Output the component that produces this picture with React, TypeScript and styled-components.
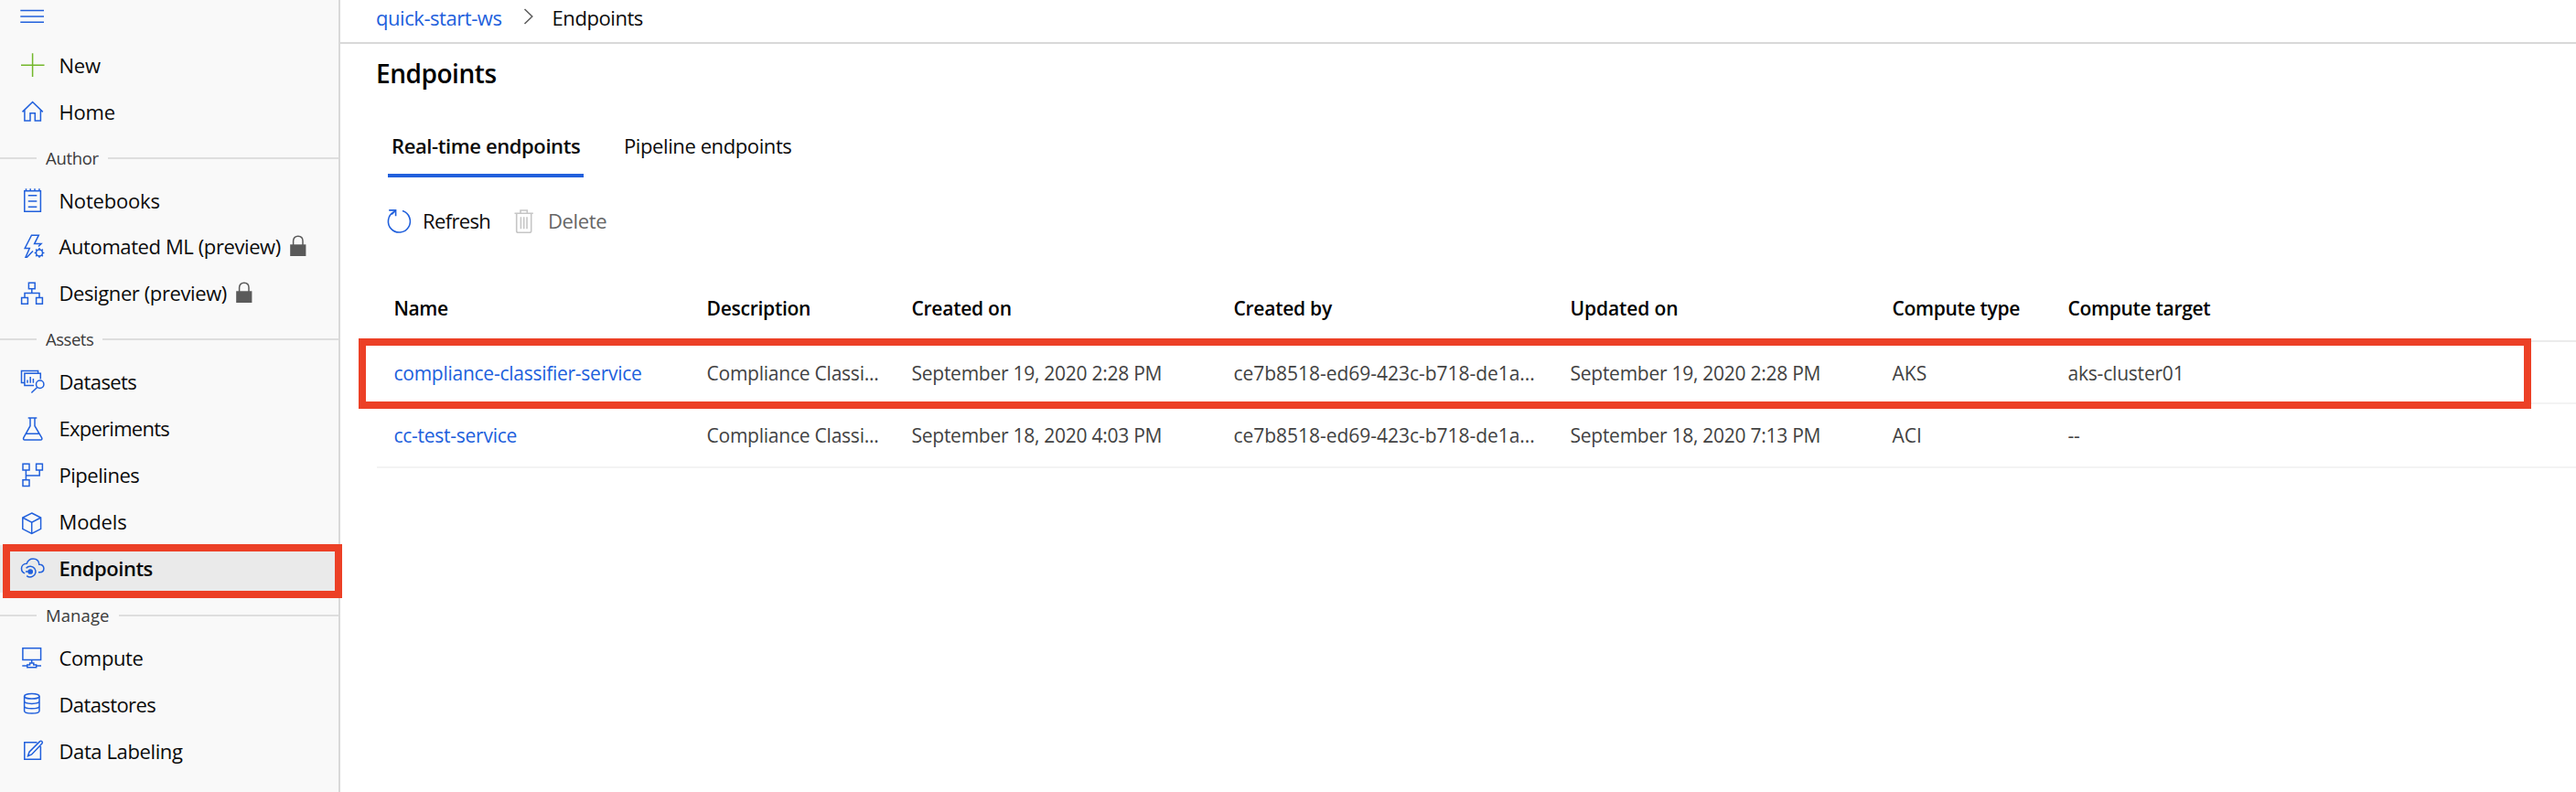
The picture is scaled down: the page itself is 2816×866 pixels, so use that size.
import React from "react";
import styled, { createGlobalStyle } from "styled-components";

const BLUE = "#2160dc";
const RED = "#ec4026";

const GlobalStyle = createGlobalStyle`
  * { box-sizing: border-box; }
  body {
    margin: 0;
    background: #fff;
    color: #0b0b0b;
    font-family: "Open Sans", "Noto Sans", sans-serif;
    font-size: 22px;
    overflow: hidden;
  }
`;

const Page = styled.div`
  display: flex;
  width: 100%;
  height: 866px;
`;

const Text = styled.span<{ $track?: number }>`
  letter-spacing: ${(p) => p.$track ?? 0}px;
  white-space: nowrap;
`;

/* ---------- sidebar ---------- */

const Sidebar = styled.nav`
  flex: 0 0 372px;
  display: flex;
  flex-direction: column;
  background: #f9f9f9;
  border-right: 2px solid #d9d9d9;
`;

const MenuToggle = styled.div`
  height: 46px;
  padding-left: 20px;
`;

const NavItem = styled.div<{ $active?: boolean; $height?: number }>`
  position: relative;
  display: flex;
  align-items: flex-start;
  height: ${(p) => p.$height ?? 51}px;
  padding: 10px 0 0 20px;
  line-height: 30px;
  background: ${(p) => (p.$active ? "#eaeaea" : "transparent")};
  font-weight: ${(p) => (p.$active ? 600 : 400)};
`;

const NavIcon = styled.svg`
  display: block;
  flex: none;
  width: 30px;
  height: 31px;
  margin-right: 14.5px;
  fill: none;
  stroke: ${BLUE};
  stroke-width: 1.5;
`;

const LockIcon = styled.svg`
  width: 18px;
  height: 24px;
  margin: 3px 0 0 10px;
`;

const GroupHeader = styled.div`
  display: flex;
  align-items: center;
  gap: 10px;
  height: 46px;
  padding-top: 4px;
  color: #3b3b3b;
  font-size: 18.5px;
  line-height: 26px;

  &::before,
  &::after {
    content: "";
    height: 2px;
    background: #dedede;
  }
  &::before { width: 40px; }
  &::after { flex: 1; }

  ${Text} { padding-bottom: 1px; }
`;

const NavHighlight = styled.div`
  position: absolute;
  z-index: 2;
  top: -1px;
  left: 3px;
  width: 371px;
  height: 59px;
  border: 8px solid ${RED};
`;

/* ---------- main area ---------- */

const Main = styled.main`
  flex: 1;
  min-width: 0;
  display: flex;
  flex-direction: column;
`;

const Breadcrumbs = styled.div`
  display: flex;
  align-items: center;
  height: 48px;
  padding: 0 0 8px 39px;
  border-bottom: 2px solid #d9d9d9;
`;

const CrumbLink = styled.a`
  color: ${BLUE};
`;

const Chevron = styled.svg`
  width: 12px;
  height: 18px;
  margin: 0 20px 2px 23px;
  fill: none;
  stroke: #5c5c5c;
  stroke-width: 1.5;
`;

const Title = styled.h1`
  margin: 0;
  padding: 1px 0 0 39px;
  height: 62px;
  font-size: 28px;
  font-weight: 600;
  line-height: 62px;
  color: #000;
`;

const Tabs = styled.div`
  display: flex;
  gap: 40px;
  height: 84px;
  padding-left: 52px;
`;

const Tab = styled.div<{ $active?: boolean }>`
  width: 214px;
  height: 84px;
  padding: 34px 0 0 4px;
  line-height: 30px;
  font-weight: ${(p) => (p.$active ? 600 : 400)};
  border-bottom: 4px solid ${(p) => (p.$active ? BLUE : "transparent")};
`;

const Toolbar = styled.div`
  display: flex;
  align-items: center;
  height: 95px;
  padding-left: 50px;

  ${Text} { padding-bottom: 1px; }
`;

const ToolButton = styled.div<{ $disabled?: boolean }>`
  display: flex;
  align-items: center;
  width: 137px;
  color: ${(p) => (p.$disabled ? "#666" : "inherit")};
`;

const ToolIcon = styled.svg`
  width: 30px;
  height: 30px;
  margin-right: 10px;
  fill: none;
  stroke-width: 1.6;
`;

const Table = styled.div`
  margin-left: 40px;
  font-size: 21px;
`;

const Row = styled.div`
  position: relative;
  display: grid;
  grid-template-columns: 342px 224px 352px 368px 352px 192px 1fr;
  align-items: center;
  height: 68px;
  padding: 2px 0 0 18.5px;
  color: #424242;
  border-bottom: 2px solid #f3f3f3;

  &:last-child {
    height: 70px;
    padding-top: 0;
  }
`;

const HeaderRow = styled(Row)`
  height: 85px;
  padding-top: 12px;
  color: #000;
  font-weight: 600;
  border-bottom-color: #ebebeb;
`;

const NameLink = styled.a`
  color: ${BLUE};
`;

const RowHighlight = styled.div`
  position: absolute;
  z-index: 2;
  top: -4px;
  left: -20px;
  width: 2375px;
  height: 77px;
  border: 8px solid ${RED};
`;

/* ---------- icons ---------- */

const icons: Record<string, React.ReactNode> = {
  New: <path stroke="#73b72b" d="M3 15.2H28.5M15.6 2.3V28" />,
  Home: <path d="M4.5 15.4L15.6 4.5L26.8 15.4M6.9 13.2V25H13V16.7H18.3V25H24.4V13.2" />,
  Notebooks: (
    <path d="M6.8 4.7H24.4V27.3H6.8ZM8.5 2.3V4.7M13.2 2.3V4.7M18 2.3V4.7M22.9 2.3V4.7M10.8 9.7H20.3M10.8 16H20.3M10.8 22.3H20.3" />
  ),
  "Automated ML (preview)": (
    <>
      <path d="M22 15.5L25 12.6H17.6L22.3 3.2H14.5L7.2 17.5H12.3L8 27.3H9.5L16 20.5" />
      <circle cx="23" cy="22.4" r="3.5" />
      <path d="M23 18.9V17M23 25.8V27.8M19.5 22.4H17.6M26.5 22.4H28.4M20.5 19.9L19.2 18.6M25.5 24.9L26.8 26.2M25.5 19.9L26.8 18.6M20.5 24.9L19.2 26.2" />
    </>
  ),
  "Designer (preview)": (
    <path d="M11.4 4.2H18.2V10.7H11.4ZM3.6 20.6H10.4V27.2H3.6ZM19.6 20.6H26.4V27.2H19.6ZM14.8 10.7V15.4M7 20.6V15.4H23V20.6" />
  ),
  Datasets: (
    <>
      <path d="M21.6 6V3.4H3.5V16.4H6.8M24.3 12.5V6.3H6.9V19.4H17M10 13.6V16.8M13.2 10V16.8M16.4 12V16.8M20.6 21.5L14.4 27.5" />
      <circle cx="23.7" cy="18.3" r="4.2" />
    </>
  ),
  Experiments: (
    <path d="M10.7 4H20.3M13 4V12.7L5.8 25.6C5.2 27 5.8 28.1 7 28.1H24.4C25.7 28.1 26.3 27 25.6 25.6L18 12.7V4M8.4 21.3H23" />
  ),
  Pipelines: (
    <path d="M5 3.3H12V10H5ZM19.6 3.3H26.4V10H19.6ZM5 20.8H12V27.5H5ZM8.4 10V20.8M8.4 16H23.2V10" />
  ),
  Models: <path d="M14.7 6L24.6 11V23.3L14.7 28.3L4.8 23.3V11ZM4.8 11L14.7 16.2L24.6 11M14.7 16.2V28.3" />,
  Endpoints: (
    <>
      <path d="M7.2 20.9C4.8 20.2 3.5 18 3.5 15.6C3.5 12.4 6 10.3 9.2 10.3C10.4 6.8 13 5 16.2 5C19.9 5 22.5 7.4 22.8 11.2C26 11 27.9 13 27.9 15.6C27.9 18.2 26.2 19.8 23.6 19.8H22" />
      <path d="M8.6 15.3C11 12.6 15.4 12.7 17.8 15.6C20 18.6 19 22.6 15.8 24.2C13.6 25.3 11 25 9.2 23.6M8 19H13" />
      <circle cx="13.2" cy="19" r="2.1" fill={BLUE} />
    </>
  ),
  Compute: (
    <path d="M4.9 4.7H24.6V17.6H4.9ZM14.7 17.6V21M9.8 25.7V23H12.6V21H16.8V23H19.7V25.7ZM4.3 24H9.8M19.7 24H25" />
  ),
  Datastores: (
    <>
      <ellipse cx="14.8" cy="6.3" rx="8.2" ry="2.8" />
      <path d="M6.6 6.3V22.3C6.6 26 23 26 23 22.3V6.3M6.6 11.6C6.6 15.3 23 15.3 23 11.6M6.6 17C6.6 20.7 23 20.7 23 17" />
    </>
  ),
  "Data Labeling": (
    <path d="M20.5 5.8H6.8V24.2H24.4V10M10.6 20.6L12 16.2L23.6 4.6C24.2 4 25.2 4 25.9 4.7C26.5 5.4 26.5 6.3 25.9 6.9L14.6 18.9Z" />
  ),
};

type Item = { label: string; track: number; locked?: boolean; active?: boolean; height?: number };

const groups: { title?: string; track?: number; items: Item[] }[] = [
  { items: [{ label: "New", track: -0.2 }, { label: "Home", track: -0.2 }] },
  {
    title: "Author",
    track: -0.3,
    items: [
      { label: "Notebooks", track: -0.2, height: 50 },
      { label: "Automated ML (preview)", track: -0.4, locked: true },
      { label: "Designer (preview)", track: -0.4, locked: true },
    ],
  },
  {
    title: "Assets",
    track: -0.48,
    items: [
      { label: "Datasets", track: -0.59 },
      { label: "Experiments", track: -0.74 },
      { label: "Pipelines", track: -0.47 },
      { label: "Models", track: -0.12 },
      { label: "Endpoints", track: -0.47, active: true, height: 52 },
    ],
  },
  {
    title: "Manage",
    track: 0.1,
    items: [
      { label: "Compute", track: -0.36 },
      { label: "Datastores", track: -0.6 },
      { label: "Data Labeling", track: -0.39 },
    ],
  },
];

const columns: [string, number][] = [
  ["Name", -0.4],
  ["Description", -0.25],
  ["Created on", -0.25],
  ["Created by", -0.25],
  ["Updated on", -0.1],
  ["Compute type", -0.3],
  ["Compute target", -0.3],
];

const cellTracks = [-0.26, -0.23, -0.26, -0.03, -0.26, 0, -0.2];

const rows = [
  {
    highlighted: true,
    cells: [
      "compliance-classifier-service",
      "Compliance Classi...",
      "September 19, 2020 2:28 PM",
      "ce7b8518-ed69-423c-b718-de1a...",
      "September 19, 2020 2:28 PM",
      "AKS",
      "aks-cluster01",
    ],
  },
  {
    highlighted: false,
    cells: [
      "cc-test-service",
      "Compliance Classi...",
      "September 18, 2020 4:03 PM",
      "ce7b8518-ed69-423c-b718-de1a...",
      "September 18, 2020 7:13 PM",
      "ACI",
      "--",
    ],
  },
];

const Lock = () => (
  <LockIcon viewBox="0 0 18 24">
    <path d="M3.6 11V6.5C3.6 3.2 5.8 1.2 8.8 1.2S14 3.2 14 6.5V11" fill="none" stroke="#5a5a5a" strokeWidth="1.5" />
    <rect x="0.2" y="10.3" width="17.2" height="12.7" fill="#5a5a5a" />
  </LockIcon>
);

export default function App() {
  return (
    <Page>
      <GlobalStyle />
      <Sidebar>
        <MenuToggle>
          <NavIcon viewBox="0 0 30 31">
            <path d="M2.3 11.6H28M2.3 18H28M2.3 24.3H28" />
          </NavIcon>
        </MenuToggle>
        {groups.map((group, i) => (
          <React.Fragment key={i}>
            {group.title && (
              <GroupHeader>
                <Text $track={group.track}>{group.title}</Text>
              </GroupHeader>
            )}
            {group.items.map((item) => (
              <NavItem key={item.label} $active={item.active} $height={item.height}>
                <NavIcon viewBox="0 0 30 31">{icons[item.label]}</NavIcon>
                <Text $track={item.track}>{item.label}</Text>
                {item.locked && <Lock />}
                {item.active && <NavHighlight />}
              </NavItem>
            ))}
          </React.Fragment>
        ))}
      </Sidebar>
      <Main>
        <Breadcrumbs>
          <CrumbLink><Text $track={-0.44}>quick-start-ws</Text></CrumbLink>
          <Chevron viewBox="0 0 12 18">
            <path d="M1.5 1L9.8 9L1.5 17" />
          </Chevron>
          <Text $track={-0.43}>Endpoints</Text>
        </Breadcrumbs>
        <Title><Text $track={-0.45}>Endpoints</Text></Title>
        <Tabs>
          <Tab $active><Text $track={-0.4}>Real-time endpoints</Text></Tab>
          <Tab><Text $track={-0.4}>Pipeline endpoints</Text></Tab>
        </Tabs>
        <Toolbar>
          <ToolButton>
            <ToolIcon viewBox="0 0 30 30" stroke={BLUE}>
              <path d="M18 3.6A12 12 0 1 1 8.5 4.6M3.2 2.9H10.6V9.2M10.4 3.2L6.2 7.4" />
            </ToolIcon>
            <Text $track={-0.65}>Refresh</Text>
          </ToolButton>
          <ToolButton $disabled>
            <ToolIcon viewBox="0 0 30 30" stroke="#c6c6c6">
              <path d="M3.5 6.2H23.8M5.7 6.2V25.4Q5.7 27.3 7.6 27.3H19.8Q21.7 27.3 21.7 25.4V6.2M10 6.2V3H17.3V6.2M10.4 10.3V23.2M13.7 10.3V23.2M17 10.3V23.2" />
            </ToolIcon>
            <Text $track={-0.35}>Delete</Text>
          </ToolButton>
        </Toolbar>
        <Table>
          <HeaderRow>
            {columns.map(([label, track]) => (
              <Text key={label} $track={track}>{label}</Text>
            ))}
          </HeaderRow>
          {rows.map((row) => (
            <Row key={row.cells[0]}>
              {row.cells.map((cell, i) => (
                <Text key={i} $track={cellTracks[i]}>
                  {i === 0 ? <NameLink>{cell}</NameLink> : cell}
                </Text>
              ))}
              {row.highlighted && <RowHighlight />}
            </Row>
          ))}
        </Table>
      </Main>
    </Page>
  );
}
